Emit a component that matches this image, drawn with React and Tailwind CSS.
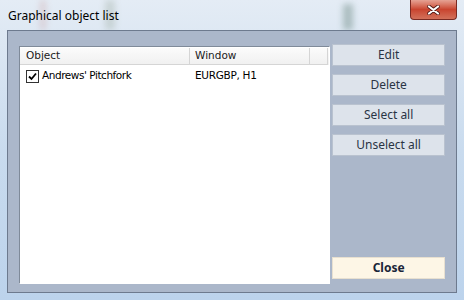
export default function App() {
  return (
    <div className="w-[464px] h-[300px] relative overflow-hidden bg-gradient-to-b from-[#e4ecf5] via-[#c9dbee] to-[#bcd3ec]">
      <div className="absolute left-[40px] top-0 w-[6px] h-[30px] bg-[#c89090] opacity-30 blur-[3px]" />
      <div className="absolute left-[105px] top-0 w-[10px] h-[30px] bg-[#90a090] opacity-30 blur-[3px]" />
      <div className="absolute left-[343px] top-[4px] w-[10px] h-[26px] bg-[#5a7a70] opacity-40 blur-[3px]" />
      <div className="relative flex flex-col h-full px-[7px]">
        <div className="h-[30px] flex items-center pl-[1px] pt-[2px] text-[12px] text-black" style={{ fontFamily: '"Noto Sans", sans-serif' }}>
          Graphical object list
        </div>
        <div className="h-[263px] border border-[#6d7a8e] bg-[#abb7ca] flex pt-[15px] pl-[11px] pr-[11px] pb-[8px] gap-[2px]" style={{ fontFamily: '"DejaVu Sans", sans-serif' }}>
          <div className="w-[312px] h-[238px] border border-t-[#7f8a99] border-l-[#7f8a99] border-r-[#ffffff] border-b-[#ffffff] bg-white flex flex-col">
            <div className="h-[17px] mt-[1px] flex text-[10.5px] text-[#202020] bg-gradient-to-b from-[#fbfbfb] to-[#f0f0f0]">
              <div className="w-[170px] border-r border-b border-[#d5d5d5] pl-[6px] flex items-center">Object</div>
              <div className="w-[120px] border-r border-b border-[#d5d5d5] pl-[5px] flex items-center">Window</div>
              <div className="w-[18px] border-r border-b border-[#d5d5d5]" />
            </div>
            <div className="flex items-center h-[18px] mt-[2px] text-[10.5px] text-black">
              <div className="w-[170px] flex items-center pl-[6px] gap-[3px]">
                <div className="w-[13px] h-[13px] border border-[#333] bg-white flex items-center justify-center">
                  <svg width="9" height="9" viewBox="0 0 9 9"><path d="M1 4.5 L3.5 7 L8 1.5" stroke="#000" strokeWidth="1.8" fill="none" /></svg>
                </div>
                <span className="tracking-[-0.45px]">Andrews' Pitchfork</span>
              </div>
              <div className="pl-[5px] tracking-[-0.3px]">EURGBP, H1</div>
            </div>
          </div>
          <div className="flex flex-col w-[113px] text-[12px] text-[#2a3444]" style={{ fontFamily: '"Noto Sans", sans-serif' }}>
            <div className="-mt-[2px] flex flex-col gap-[8px]">
              <button className="h-[22px] bg-[#dde3eb] border border-[#b9c2cf] flex items-center justify-center">Edit</button>
              <button className="h-[22px] bg-[#dde3eb] border border-[#b9c2cf] flex items-center justify-center">Delete</button>
              <button className="h-[22px] bg-[#dde3eb] border border-[#b9c2cf] flex items-center justify-center">Select all</button>
              <button className="h-[22px] bg-[#dde3eb] border border-[#b9c2cf] flex items-center justify-center">Unselect all</button>
            </div>
            <div className="flex-1" />
            <button className="h-[22px] mb-[5px] bg-[#fdf6e6] border border-[#e8e0d0] flex items-center justify-center font-bold text-[#1a2538]">Close</button>
          </div>
        </div>
      </div>
      <div className="absolute top-0 right-[7px] w-[47px] h-[20px] rounded-b-[4px] border border-t-0 border-[#7a2a22] bg-gradient-to-b from-[#e5a294] via-[#c9442f] to-[#d2705a] flex items-center justify-center">
        <svg width="13" height="10" viewBox="0 0 13 10">
          <path d="M2 1.5 L11 8.5 M11 1.5 L2 8.5" stroke="#4a1410" strokeWidth="3.6" strokeLinecap="round" />
          <path d="M2 1.5 L11 8.5 M11 1.5 L2 8.5" stroke="#ffffff" strokeWidth="2.2" strokeLinecap="round" />
        </svg>
      </div>
    </div>
  );
}
